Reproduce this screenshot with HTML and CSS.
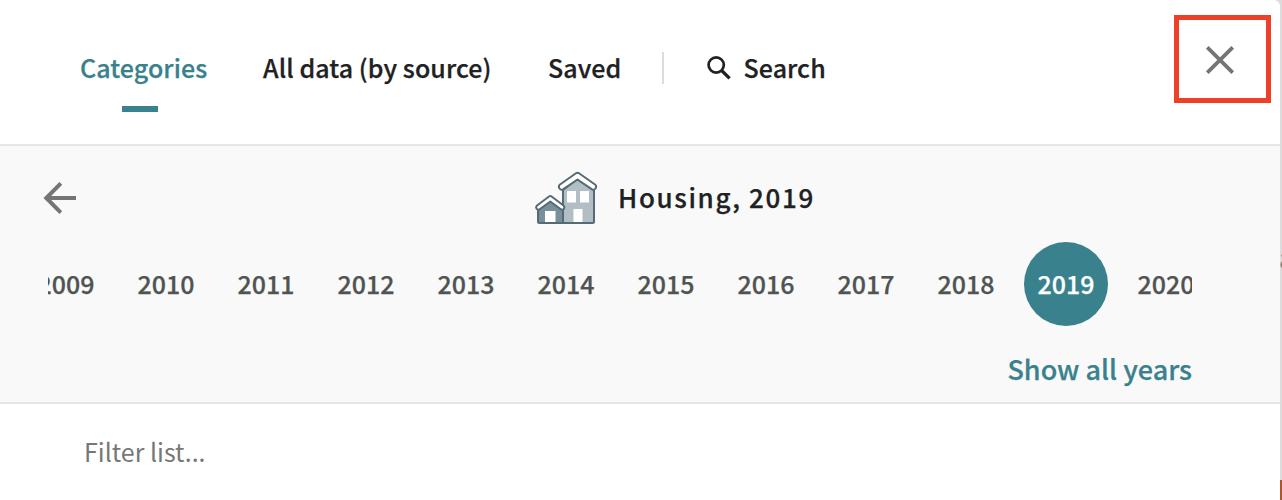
FILE: index.html
```html
<!DOCTYPE html>
<html lang="en">
<head>
<meta charset="utf-8">
<title>Housing, 2019</title>
<link rel="stylesheet" href="styles.css">
</head>
<body>
<div class="backdrop"><span class="map-label">a</span><span class="map-area"></span></div>
<main class="panel">
  <header class="topbar">
    <nav class="tabs">
      <a class="tab tab-categories active"><span class="label">Categories</span></a>
      <a class="tab tab-all"><span class="label">All data (by source)</span></a>
      <a class="tab tab-saved"><span class="label">Saved</span></a>
      <span class="divider"></span>
      <a class="tab tab-search">
        <svg class="search-icon" viewBox="0 0 24 24" width="24" height="24" fill="none" stroke="#202122" stroke-width="2.7"><circle cx="9.2" cy="9" r="7.6"/><path d="M14.6 14.5 22.6 22.4" stroke-width="3.2"/></svg>
        <span class="label">Search</span>
      </a>
    </nav>
    <button class="close" aria-label="Close"><svg viewBox="0 0 30 30" width="30" height="30" stroke="#757575" stroke-width="3.8"><path d="M2.3 2.3 27.7 27.7M27.7 2.3 2.3 27.7"/></svg></button>
  </header>
  <section class="year-section">
    <div class="title-row">
      <svg class="back" viewBox="0 0 34 34" width="34" height="34" fill="none" stroke="#757575" stroke-width="4"><path d="M17.8 2.4 3.3 17 17.8 31.6M3.3 17H33"/></svg>
      <div class="title">
        <svg class="house" viewBox="0 0 64 54" width="64" height="54" stroke="#546a75" stroke-width="2" stroke-linejoin="round">
          <path fill="#b2bec5" d="M29 19 43 8 60 19V50.500Q60 52 58.500 52H29Z"/>
          <path fill="#78909c" d="M4 37 16 27 29 37V52H5.500Q4 52 4 50.500Z"/>
          <path fill="#fff" d="M42 2.200Q43.500 1.200 45 2.200L61 13.500Q63 15 61.500 17.500Q60 19.500 58 18.300L43.500 8.500 29 18.300Q27 19.500 25.500 17.500Q24 15 26 13.500Z"/>
          <path fill="#fff" d="M15 25.500Q16.300 24.500 17.600 25.500L29.500 34.500Q31 36 30 37.700Q28.500 39.500 26.500 38L16.300 30.500 6 38Q4 39.500 2.500 37.700Q1.500 36 3 34.500Z"/>
          <path stroke="none" fill="#fff" d="M33 20h9v11.500h-9zM46 20h9v11.500h-9zM39.500 38h9v13h-9zM11 40h10.500v11H11z"/>
        </svg>
        <h1>Housing, 2019</h1>
      </div>
    </div>
    <div class="years">
      <span class="year">2009</span><span class="year">2010</span><span class="year">2011</span><span class="year">2012</span><span class="year">2013</span><span class="year">2014</span><span class="year">2015</span><span class="year">2016</span><span class="year">2017</span><span class="year">2018</span><span class="year selected">2019</span><span class="year">2020</span>
    </div>
    <div class="show-row"><a class="show-all">Show all years</a></div>
  </section>
  <div class="filter"><input class="filter-input" placeholder="Filter list..." aria-label="Filter list"></div>
</main>
<div class="highlight"></div>
</body>
</html>
```
FILE: styles.css
```css
* { box-sizing: border-box; }
body {
  margin: 0;
  width: 1282px;
  height: 500px;
  overflow: hidden;
  position: relative;
  background: #dcdcdc;
  font-family: "Noto Sans CJK SC", "Noto Sans", sans-serif;
  font-size: 25px;
  font-weight: 500;
  line-height: 36px;
  color: #202122;
  -webkit-text-stroke: 0.25px currentColor;
}
.panel { width: 1280px; height: 500px; background: #fff; border-top-right-radius: 6px; overflow: hidden; position: relative; }
.backdrop { position: absolute; right: 0; top: 0; width: 8px; height: 500px; overflow: hidden; }
.map-label { position: absolute; left: 5px; top: 239px; font-size: 28px; color: #888; }
.map-area { position: absolute; right: 0; bottom: 0; width: 8px; height: 20px; background: #ad552b; }
.topbar { height: 146px; border-bottom: 2px solid #e6e6e6; display: flex; justify-content: space-between; padding: 45px 45px 0 80px; }
.tabs { display: flex; align-items: flex-start; }
.tab { display: flex; align-items: center; white-space: nowrap; position: relative; height: 48px; letter-spacing: 0.08px; }
.label { display: block; height: 48px; line-height: 44px; }
.tab-categories { width: 183px; color: #39818c; }
.active::after { content: ""; position: absolute; left: 42px; top: 61px; width: 36px; height: 6px; background: #39818c; }
.tab-all { width: 285px; }
.tab-saved { width: 114px; }
.divider { width: 2px; height: 32px; margin-top: 7px; background: #dcdcdc; }
.tab-search { margin-left: 43px; gap: 12.5px; }
.search-icon { margin-top: -2px; }
.close { border: 0; padding: 0; width: 30px; height: 30px; background: none; }
.close svg { display: block; }
.year-section { height: 258px; background: #f9f9f9; border-bottom: 2px solid #e6e6e6; padding: 20px 88px 0 48px; }
.title-row { height: 76px; display: flex; align-items: flex-start; }
.back { margin: 15px 0 0 -5px; }
.title { display: flex; margin: 5px 0 0 457px; gap: 20px; }
h1 { margin: 0; font-size: 26px; line-height: 52px; font-weight: 500; letter-spacing: 1.65px; white-space: nowrap; }
.years { height: 84px; display: flex; overflow: hidden; }
.year { flex: 0 0 84px; height: 84px; margin-right: 16px; text-align: center; line-height: 82px; color: #4f5352; }
.year:first-child { margin-left: -24px; }
.selected { border-radius: 50%; background: #39818c; color: #fff; }
.show-row { display: flex; justify-content: flex-end; padding-top: 25px; }
.show-all { color: #39818c; white-space: nowrap; font-size: 27px; }
.filter { height: 96px; padding: 29px 84px; }
.filter-input { display: block; width: 600px; height: 36px; border: 0; padding: 0; background: none; font: 400 25px/36px "Noto Sans CJK SC", sans-serif; -webkit-text-stroke: 0; }
.filter-input::placeholder { color: #777; opacity: 1; }
.highlight { position: absolute; left: 1174px; top: 15px; width: 97px; height: 88px; border: 5px solid #ee4026; }
```
